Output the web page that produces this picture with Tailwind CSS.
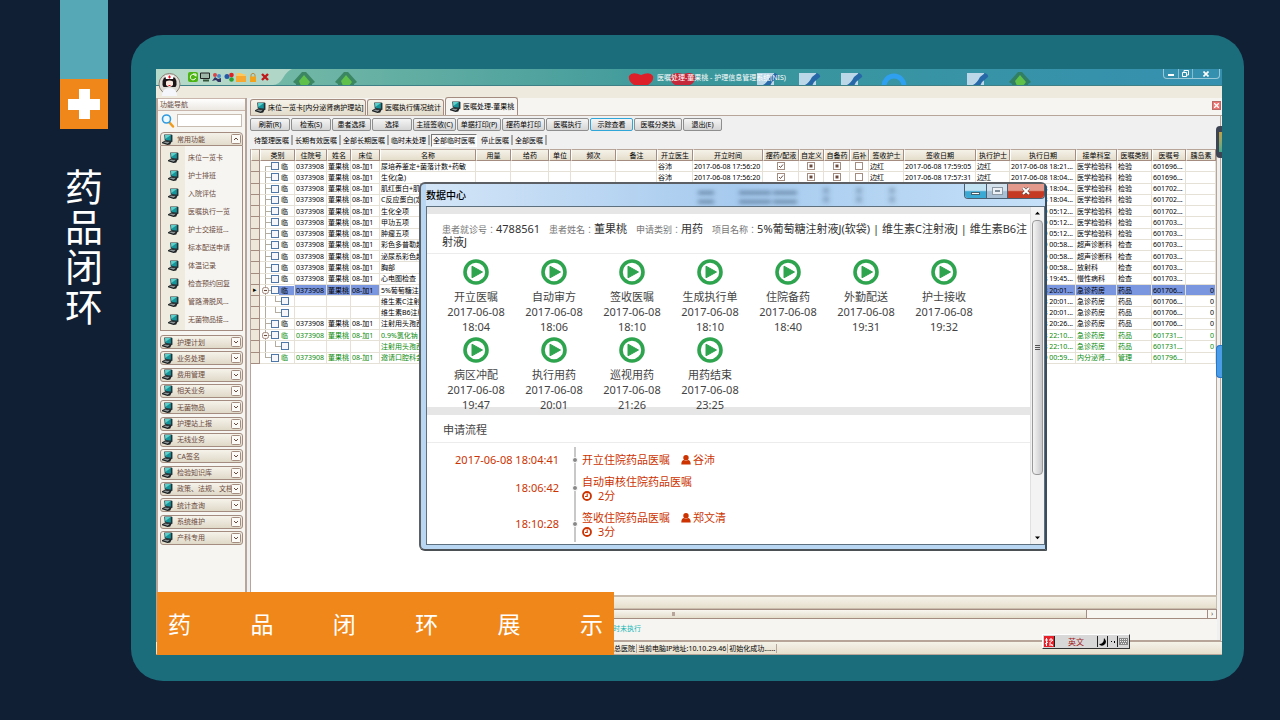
<!DOCTYPE html>
<html lang="zh-CN">
<head>
<meta charset="utf-8">
<meta name="viewport" content="width=device-width, initial-scale=1">
<title>药品闭环展示</title>
<script src="https://cdn.jsdelivr.net/npm/@tailwindcss/browser@4"></script>
</head>
<body class="flex h-screen overflow-hidden bg-[#111f35] font-['Noto_Sans','Noto_Sans_CJK_SC',sans-serif] text-[7px] leading-[9px] text-black">

<svg class="hidden" aria-hidden="true">
  <symbol id="pc" viewBox="0 0 20 20">
    <path d="M4 1h13l2 1v12l-3 1L5 12z" fill="#22343a"/><path d="M5.500 2h10.500v10L6.500 11z" fill="#159499"/><path d="M5.500 2h10.500L6 9z" fill="#5fd0cc"/>
    <path d="M0 15l6-3 11 2.500-2 4.500-5 1L0 17z" fill="#1c2022"/><path d="M2 15l4-1.500 8 1.500-4 2.500z" fill="#8d9596"/>
  </symbol>
  <symbol id="play" viewBox="0 0 26 26"><circle cx="13" cy="13" r="11" fill="none" stroke="#2ea44f" stroke-width="3.600"/><path d="M9 7.200v11.600L19.500 13z" fill="#2ea44f" stroke="#2ea44f" stroke-linejoin="round"/></symbol>
  <symbol id="user" viewBox="0 0 10 10"><circle cx="5" cy="2.800" r="2.700"/><path d="M.3 9.500c0-3 1-4.300 2.700-4.500q2 1.500 4 0c1.700.2 2.700 1.500 2.700 4.500z"/></symbol>
  <symbol id="clock" viewBox="0 0 10 10"><circle cx="5" cy="5" r="4" fill="none" stroke="currentColor" stroke-width="1.800"/><path d="M5.200 2.500V5.500H3" fill="none" stroke="currentColor" stroke-width="1.100"/></symbol>
  <symbol id="house" viewBox="0 0 24 14"><path d="M1 10L10 0h4l9 10-3 2v2H4v-2z" fill="#2f7a52" fill-opacity=".8"/><path d="M7 9l5-6 6 7-3 4H9z" fill="#5fc04a"/></symbol>
  <symbol id="doc" viewBox="0 0 24 14"><path d="M1 1h17v13H1z" fill="#bcd8e8"/><path d="M4 14q6-1 10-9l5-4q4 2 3 4l-6 5-2 4z" fill="#2768a8"/></symbol>
</svg>

<aside class="ml-[60px] flex w-12 shrink-0 flex-col items-center">
  <div class="h-[79px] w-full shrink-0 bg-[#57a8b7]"></div>
  <div class="flex h-[50px] w-full shrink-0 items-center justify-center bg-[#f0871b]">
    <svg class="size-8" viewBox="0 0 32 32"><path d="M11 1h11v10h10v11H22v9H11v-9H0V11h11z" fill="#fff"/></svg>
  </div>
  <h1 class="mt-[37px] w-[38px] text-center text-[38px] leading-[40px] font-normal break-all text-white">药品闭环</h1>
</aside>

<div class="mt-[35px] mr-9 mb-[39px] ml-[23px] flex min-w-0 flex-1 rounded-[32px] bg-[#1c6d7b] pt-[34px] pr-[22px] pb-[26px] pl-[25px]">
<main class="relative flex min-w-0 flex-1 flex-col bg-[#f0f0f0]">

  <header class="relative flex h-[17px] shrink-0 items-center overflow-hidden border-b border-[#3f7f86] bg-linear-to-r from-[#82c2aa] via-[#3a979a] to-[#3590b0] pl-8">
    <svg class="absolute top-0 left-0 h-4 w-[136px]" viewBox="0 0 136 16"><path d="M0 0h136q-5 2-9 9t-10 7H0z" fill="#d8eadd" fill-opacity=".6"/></svg>
    <svg class="absolute top-[3px] left-[136px] h-[14px] w-6"><use href="#house"/></svg>
    <svg class="absolute top-[3px] left-[178px] h-[14px] w-6"><use href="#house"/></svg>
    <svg class="absolute top-[3px] left-[472px] h-[14px] w-[72px]" viewBox="0 0 72 14"><path d="M6 13Q0 9 1 4q3-5 12-1 9-4 12 1 1 5-5 9z" fill="#dc1f28"/><path d="M47 13Q41 9 43 4q3-5 12-2 9-3 12 2 1 6-5 9z" fill="#c4283a"/></svg>
    <svg class="absolute top-[3px] left-[600px] h-[14px] w-6"><use href="#doc"/></svg>
    <svg class="absolute top-[3px] left-[642px] h-[14px] w-6"><use href="#doc"/></svg>
    <svg class="absolute top-[3px] left-[684px] h-[14px] w-6"><use href="#doc"/></svg>
    <svg class="absolute top-[3px] left-[724px] h-[14px] w-7" viewBox="0 0 28 14"><circle cx="14" cy="14" r="10" fill="none" stroke="#2fa0f0" stroke-width="5"/></svg>
    <svg class="absolute top-[3px] left-[810px] h-[14px] w-6"><use href="#doc"/></svg>
    <svg class="absolute top-[3px] left-[852px] h-[14px] w-6"><use href="#house"/></svg>
    <div class="relative flex gap-[2px]">
      <button aria-label="刷新"><svg class="size-[10px]" viewBox="0 0 10 10"><rect width="10" height="10" rx="2" fill="#4cb514"/><path d="M7.500 4A2.700 2.700 0 1 0 7.600 6M5 2h3v2.500" fill="none" stroke="#fff"/></svg></button>
      <button aria-label="电脑"><svg class="size-[10px]" viewBox="0 0 10 10"><path d="M.5 1h9v5.500h-9z" fill="#9cb6a8" stroke="#222"/><path d="M3 7.500h6v2H3z" fill="#35553a"/></svg></button>
      <button aria-label="人员"><svg class="size-[10px]" viewBox="0 0 10 10"><circle cx="3" cy="3" r="2" fill="#d44"/><circle cx="7" cy="4" r="2" fill="#48c"/><path d="M0 9l3-4 3 2 3-1v4H6L4 8z" fill="#336"/></svg></button>
      <button aria-label="分组"><svg class="size-[10px]" viewBox="0 0 10 10"><circle cx="3" cy="4.500" r="2.500" fill="#235ba8"/><circle cx="7.500" cy="3" r="2.300" fill="#e02020"/><circle cx="7.500" cy="7.500" r="2.300" fill="#29a030"/></svg></button>
      <button aria-label="文件夹"><svg class="size-[10px]" viewBox="0 0 10 10"><path d="M1 1h4l1 1h3v3H1z" fill="#ffc65a"/><path d="M0 4h10v6H0z" fill="#f7a833"/></svg></button>
      <button aria-label="锁定"><svg class="size-[10px]" viewBox="0 0 10 10"><path d="M3 5V2.500q2-2.500 4 0V5" fill="none" stroke="#b88a40"/><path d="M2 4.500h6V10H2z" fill="#f3a21c"/></svg></button>
      <button aria-label="退出"><svg class="size-[10px]" viewBox="0 0 10 10"><path d="M2 2l6 6M8 2L2 8" stroke="#c01818" stroke-width="2.400"/></svg></button>
    </div>
    <p class="absolute left-[501px] whitespace-nowrap text-white">医嘱处理-董果桃 - 护理信息管理系统(NIS)</p>
    <div class="absolute top-0 right-[2px] flex h-[10px] w-[57px] rounded-b border border-t-0 border-white/50 text-white">
      <button class="flex flex-1 items-center justify-center border-r border-white/40" aria-label="最小化"><span class="mt-[2px] h-[2px] w-[6px] bg-white"></span></button>
      <button class="flex flex-1 items-center justify-center border-r border-white/40" aria-label="还原"><svg class="size-[7px]" viewBox="0 0 7 7" fill="none" stroke="#fff"><path d="M2 2V.5h4.500V5H5M.5 2.500H4.500v4H.5z"/></svg></button>
      <button class="flex w-[26px] items-center justify-center" aria-label="关闭"><svg class="size-[6px]" viewBox="0 0 6 6"><path d="M.5.5l5 5M5.500.5l-5 5" stroke="#fff" stroke-width="1.600"/></svg></button>
    </div>
  </header>
  <div class="h-3 shrink-0 bg-[#eeeadd]"></div>
  <svg class="absolute top-1 left-[2px] size-[23px]" viewBox="0 0 23 23"><circle cx="11.500" cy="11" r="10.500" fill="#dddcd5" stroke="#8b8277"/><path d="M4.500 12q-1-9 7-9t7 9l-1 2h-12z" fill="#1d1618"/><path d="M8 8.500q3.500-2 7 0v3.500q-3.500 4-7 0z" fill="#fbe8df"/><path d="M7 2.500h9l-1 3.500H8z" fill="#fff"/><path d="M11.500 2.500v3M10 4h3M10.500 12.500h2" stroke="#e12"/><path d="M4 23q0-8 7.500-8t7.500 8z" fill="#f4f6fb"/></svg>

  <div class="flex min-h-0 flex-1">
    <nav class="flex w-[91px] shrink-0 flex-col border-x-2 border-x-[#b8a59a] bg-[#f6f5f1] text-[#6b4a3d]" aria-label="功能导航">
      <h2 class="flex h-[13px] shrink-0 items-center border-y border-[#c9b5ab] bg-linear-to-b from-white to-[#ece8e2] pl-[2px]">功能导航</h2>
      <div class="flex h-[19px] shrink-0 items-center gap-[2px] px-[3px]">
        <svg class="size-[14px] shrink-0" viewBox="0 0 14 14"><path d="M8 8l4 4.500" stroke="#ef9a1a" stroke-width="2.500" stroke-linecap="round"/><circle cx="5.500" cy="5" r="4" fill="#eef8ff" stroke="#2f9be0" stroke-width="1.600"/></svg>
        <input class="h-[13px] w-full min-w-0 border border-[#c8bcb0] bg-white" type="text" aria-label="搜索功能">
      </div>
      <section class="mx-[2px] mt-[2px] shrink-0">
        <button class="flex h-[14px] w-full items-center gap-1 rounded-t-[4px] border border-[#a48c80] bg-linear-to-b from-[#f4f1e9] to-[#e2dccb] px-[1px]" aria-expanded="true">
          <svg class="size-[11px]"><use href="#pc"/></svg>常用功能
          <svg class="ml-auto size-[10px]" viewBox="0 0 10 10"><rect x=".5" y=".5" width="9" height="9" rx="1" fill="#fbfaf6" stroke="#a48c80"/><path d="M3 6l2-2 2 2" fill="none" stroke="#6b4a3d"/></svg>
        </button>
        <ul id="menu" class="border border-t-0 border-[#a48c80] bg-linear-to-r from-[#efecdf] from-30% to-[#f6f5f1] to-30% pt-[2px] pb-[2px]"></ul>
      </section>
      <div id="groups" class="mx-[2px] mt-1 flex h-[210px] shrink-0 flex-col justify-between"></div>
    </nav>

    <section class="ml-[3px] flex min-w-0 flex-1 flex-col">
      <div class="flex h-[18px] shrink-0 items-end border-b border-[#b8a59a] bg-[#f6f5f1]" role="tablist">
        <button role="tab" class="flex h-4 w-[116px] items-center gap-[2px] rounded-t-[3px] border border-b-0 border-[#a48c80] bg-linear-to-b from-[#f6f3eb] to-[#e2dccb] pl-1 whitespace-nowrap"><svg class="size-[11px] shrink-0"><use href="#pc"/></svg>床位一览卡[内分泌肾病护理站]</button>
        <button role="tab" class="ml-[1px] flex h-4 w-[77px] items-center gap-[2px] rounded-t-[3px] border border-b-0 border-[#a48c80] bg-linear-to-b from-[#f6f3eb] to-[#e2dccb] pl-1 whitespace-nowrap"><svg class="size-[11px] shrink-0"><use href="#pc"/></svg>医嘱执行情况统计</button>
        <button role="tab" aria-selected="true" class="ml-[1px] flex h-[18px] w-[73px] items-center gap-[2px] rounded-t-[3px] border border-b-0 border-[#a48c80] bg-[#f6f5f1] pl-1 whitespace-nowrap"><svg class="size-[11px] shrink-0"><use href="#pc"/></svg>医嘱处理-董果桃</button>
        <button class="mr-[1px] mb-[5px] ml-auto flex size-[9px] items-center justify-center border border-[#b86a68] bg-[#ee7775]" aria-label="关闭标签"><svg class="size-[5px]" viewBox="0 0 5 5"><path d="M0 0l5 5M5 0L0 5" stroke="#fff" stroke-width="1.300"/></svg></button>
      </div>
      <div class="mr-[1px] flex min-h-0 flex-1 flex-col border-r border-b border-[#b8a59a] pr-[3px]">
        <div id="tools" class="mt-[2px] flex shrink-0 gap-[1px]"></div>
        <div id="filters" class="mt-[2px] flex h-[14px] shrink-0 items-center gap-[2px] pl-1 whitespace-nowrap"></div>
        <div class="mt-[2px] min-h-0 flex-1 overflow-hidden border-r border-l border-[#b8a59a] bg-white">
          <table class="h-[215px] w-full table-fixed border-separate border-spacing-0">
            <colgroup id="cols"></colgroup>
            <thead><tr id="head" class="h-3"></tr></thead>
            <tbody id="rows"></tbody>
          </table>
        </div>
        <div class="h-[14px] shrink-0 border border-t-2 border-[#c9bdb0] bg-linear-to-b from-[#f5f2e9] to-[#e6dfcd]"></div>
        <div class="flex h-[10px] shrink-0 border border-[#a48c80] bg-[#f8f6f0] pl-[9px]">
          <div class="flex w-[827px] items-center justify-center border-r border-[#a48c80] bg-linear-to-b from-[#f8f6f0] to-[#e4ddcb]"><span class="h-1 w-[3px] bg-[#b8a59a]"></span></div>
          <button class="ml-auto w-[9px] border-l border-[#a48c80] leading-[8px] text-[#6b4a3d]" aria-label="向右滚动">›</button>
        </div>
        <p class="h-[21px] shrink-0 bg-[#f6f5f1] pt-[5px] pl-[363px] text-[#12b5b5]">时未执行</p>
      </div>
    </section>
  </div>

  <footer class="flex h-[14px] shrink-0 items-center border-y border-[#b8a59a] bg-linear-to-b from-[#f5f2e9] to-[#e6dfcd] pl-[458px] whitespace-nowrap">
    <span class="border-r border-[#b8a59a] pr-[1px]">总医院</span>
    <span class="border-r border-[#b8a59a] px-[1px]">当前电脑IP地址:10.10.29.46</span>
    <span class="border-r border-[#b8a59a] px-[1px]">初始化成功......</span>
  </footer>

  <div class="absolute top-[57px] right-0 flex h-8 w-[6px] flex-col justify-center rounded-l bg-[#3d4554] pl-[3px]"><span class="h-5 bg-linear-to-b from-[#c0a040] to-[#3fa88c]"></span></div>
  <div class="absolute top-[276px] right-0 h-[33px] w-[6px] rounded-l border border-r-0 border-[#2677c8] bg-[#4a9be8]"></div>

  <div class="absolute bottom-0 left-[1px] flex h-[63px] w-[457px] items-center justify-between bg-[#f0871b] px-[11px] pt-[2px] text-[23px] font-normal text-white">
    <span>药</span><span>品</span><span>闭</span><span>环</span><span>展</span><span>示</span>
  </div>

  <div class="absolute right-[92px] bottom-[6px] flex h-[15px] w-[88px] border border-t-white border-r-[#333] border-b-[#333] border-l-white bg-[#d8d8d8] p-[1px]">
    <span class="flex w-[11px] items-center justify-center border-r border-[#222] bg-[#e8202a]"><svg class="size-[10px]" viewBox="0 0 10 10" fill="none" stroke="#fff"><path d="M1 3h3M2.500 1v8M1 7l3-2M5 3h4L5.500 6 9 9M5 8h4M7 1v2"/></svg></span>
    <button class="flex-1 border-r border-[#222] text-[8px] text-[#a01818]">英文</button>
    <span class="flex w-[10px] items-center justify-center border-r border-[#222]"><svg class="size-2" viewBox="0 0 8 8"><path d="M5 0q4 4 0 7-3 2-5-1 5 0 5-6z"/></svg></span>
    <span class="flex w-[10px] items-center justify-center gap-[2px] border-r border-[#222]"><i class="size-[1px] bg-black"></i><i class="h-[2px] w-[1px] bg-black"></i></span>
    <span class="flex w-[10px] items-center justify-center"><svg class="h-[7px] w-[9px]" viewBox="0 0 9 7"><path d="M0 0h9v7H0z" fill="#888"/><path d="M1 1.500h7M1 3.500h7M2 5.500h5" stroke="#eee" stroke-dasharray="1 1"/></svg></span>
  </div>

  <div role="dialog" aria-label="数据中心" class="absolute top-[113px] right-[175px] left-[263px] flex h-[369px] flex-col rounded-t-md rounded-bl-md border-2 border-t-[#5c6065] border-r-[#3a4d5c] border-b-[#4b5054] border-l-[#5c6065] bg-[#b9d7f3] pr-0 pb-1 pl-[5px]">
    <header class="relative flex h-[22px] shrink-0 items-center overflow-hidden bg-linear-to-r from-[#d3e5f7] via-[#a6caee] to-[#c5e0f8] text-[10px] font-medium">
      <div class="absolute top-[2px] left-[272px] flex gap-[25px] text-[8px] whitespace-nowrap text-[#24405c]/70 blur-[2px]" aria-hidden="true"><span>▬▬<br>▬▬</span><span>▬▬▬▬ ▬▬▬<br>▬▬▬▬ ▬▬▬</span><span>▣<br>▣</span><span>▣<br>▣</span><span>▣<br>▣</span></div>
      <h2 class="relative">数据中心</h2>
      <div class="absolute top-0 right-0 flex h-[15px] w-[81px] overflow-hidden rounded-b border border-t-0 border-[#4b5f72]">
        <button class="flex w-[22px] items-center justify-center border-r border-[#4b5f72] bg-linear-to-b from-[#c3e3f2] from-45% to-[#3aa9d4] to-55%" aria-label="最小化"><span class="mt-1 h-[3px] w-[9px] border border-[#46606e] bg-white"></span></button>
        <button class="flex w-[21px] items-center justify-center border-r border-[#4b5f72] bg-linear-to-b from-[#d4e2ee] from-45% to-[#a9bfd3] to-55%" aria-label="最大化"><span class="h-[6px] w-[9px] border-2 border-[#eef2f6] bg-[#7e8c99] outline outline-[#8d9aa6]"></span></button>
        <button class="flex flex-1 items-center justify-center bg-linear-to-b from-[#e39a8c] from-45% to-[#c43a22] to-55%" aria-label="关闭窗口"><svg class="size-2" viewBox="0 0 8 8"><path d="M1 1l6 6M7 1L1 7" stroke="#444" stroke-width="3"/><path d="M1 1l6 6M7 1L1 7" stroke="#fff" stroke-width="2"/></svg></button>
      </div>
    </header>
    <div class="flex min-h-0 flex-1 border border-[#5d7080] bg-white text-[11px] leading-[15px] text-[#444]">
      <div class="flex min-w-0 flex-1 flex-col overflow-hidden">
        <div class="h-[7px] shrink-0 bg-[#e6e6e6]"></div>
        <div class="h-10 shrink-0 border-b border-[#ececec] pt-[9px] pl-[15px] leading-[12px] text-[#333]">
          <p class="whitespace-nowrap"><span lang="zh-TW" class="font-['Noto_Sans_CJK_TC',sans-serif] text-[9px] text-[#777]">患者就诊号：</span>4788561<span lang="zh-TW" class="ml-[9px] font-['Noto_Sans_CJK_TC',sans-serif] text-[9px] text-[#777]">患者姓名：</span>董果桃<span lang="zh-TW" class="ml-[9px] font-['Noto_Sans_CJK_TC',sans-serif] text-[9px] text-[#777]">申请类别：</span>用药<span lang="zh-TW" class="ml-[9px] font-['Noto_Sans_CJK_TC',sans-serif] text-[9px] text-[#777]">项目名称：</span>5%葡萄糖注射液J(软袋) | 维生素C注射液J | 维生素B6注<br>射液J</p>
        </div>
        <ol id="steps" class="relative z-10 grid h-[153px] shrink-0 grid-cols-[repeat(7,78px)] content-start pt-1 pl-[10px] text-center"></ol>
        <div class="h-2 shrink-0 bg-[#e6e6e6]"></div>
        <h3 class="h-7 shrink-0 border-b border-[#ececec] pt-[7px] pl-4">申请流程</h3>
        <ol class="ml-[26px] flex shrink-0 flex-col pt-[4px] leading-[14px] text-[#cc3300]">
          <li class="flex h-[25px]"><time class="w-[106px] pt-[6px] text-right">2017-06-08 18:04:41</time><span class="relative ml-[15px] w-[2px] bg-[#c8c8c8]"><i class="absolute top-[10px] -left-[2px] size-[6px] rounded-full border border-white bg-[#888]"></i></span><p class="flex items-start pt-[6px] pl-[6px] whitespace-nowrap">开立住院药品医嘱<svg class="mt-[2px] mr-[2px] ml-[11px] size-[10px] fill-current"><use href="#user"/></svg>谷沛</p></li>
          <li class="flex h-[36px]"><time class="w-[106px] pt-[9px] text-right">18:06:42</time><span class="relative ml-[15px] w-[2px] bg-[#c8c8c8]"><i class="absolute top-[13px] -left-[2px] size-[6px] rounded-full border border-white bg-[#888]"></i></span><p class="pt-[3px] pl-[6px] whitespace-nowrap">自动审核住院药品医嘱<span class="flex items-center gap-[6px]"><svg class="size-[10px]"><use href="#clock"/></svg>2分</span></p></li>
          <li class="flex h-[34px]"><time class="w-[106px] pt-[9px] text-right">18:10:28</time><span class="relative ml-[15px] w-[2px] bg-[#c8c8c8]"><i class="absolute top-[13px] -left-[2px] size-[6px] rounded-full border border-white bg-[#888]"></i></span><div class="pt-[3px] pl-[6px] whitespace-nowrap"><p class="flex">签收住院药品医嘱<svg class="mt-[2px] mr-[2px] ml-[11px] size-[10px] fill-current"><use href="#user"/></svg>郑文清</p><p class="flex items-center gap-[6px]"><svg class="size-[10px]"><use href="#clock"/></svg>3分</p></div></li>
        </ol>
      </div>
      <div class="flex w-[14px] shrink-0 flex-col items-center border-l border-[#e0e0e0] bg-[#f3f3f3]">
        <svg class="h-[13px] w-[5px] shrink-0" viewBox="0 0 7 13"><path d="M0 8l3.500-4L7 8z"/></svg>
        <div class="flex h-[255px] w-[11px] flex-col items-center justify-center gap-[1px] rounded-sm border border-[#999] bg-linear-to-r from-[#f5f5f5] to-[#c9c9cc]"><i class="h-[1px] w-[5px] bg-[#555]"></i><i class="h-[1px] w-[5px] bg-[#555]"></i><i class="h-[1px] w-[5px] bg-[#555]"></i></div>
        <svg class="mt-auto h-[13px] w-[5px] shrink-0" viewBox="0 0 7 13"><path d="M0 5l3.500 4L7 5z"/></svg>
      </div>
    </div>
  </div>
</main>
</div>

<script>
const put = (id, html) => { document.getElementById(id).innerHTML = html; };

put('menu', ['床位一览卡','护士排班','入院评估','医嘱执行一览','护士交接班...','标本配送申请','体温记录','检查预约回复','管路滑脱风...','无菌物品接...'].map(t =>
  `<li><a href="#" class="flex h-[18px] items-center gap-[9px] pl-[7px] whitespace-nowrap"><svg class="size-[11px] shrink-0"><use href="#pc"/></svg>${t}</a></li>`).join(''));

put('groups', ['护理计划','业务处理','费用管理','相关业务','无菌物品','护理站上报','无线业务','CA签名','检验知识库','政策、法规、文档','统计查询','系统维护','产科专用'].map(t =>
  `<button class="flex h-[14px] w-full items-center gap-1 rounded-[3px] border border-[#a48c80] bg-linear-to-b from-[#f6f3eb] to-[#dfd9c8] px-[1px]"><svg class="size-[11px] shrink-0"><use href="#pc"/></svg><span class="min-w-0 flex-1 overflow-hidden text-left whitespace-nowrap">${t}</span><svg class="-ml-1 size-[10px] shrink-0" viewBox="0 0 10 10"><rect x=".5" y=".5" width="9" height="9" rx="1" fill="#fbfaf6" stroke="#a48c80"/><path d="M3 4l2 2 2-2" fill="none" stroke="#6b4a3d"/></svg></button>`).join(''));

put('tools', [['刷新(R)',40],['检索(S)',40],['患者选择',39],['选择',40],['主班签收(C)',43],['单据打印(P)',44],['摆药单打印',43],['医嘱执行',43],['示踪查看',43],['医嘱分类执',48],['退出(E)',39]].map(([t, w]) =>
  `<button style="width:${w}px" class="h-[13px] rounded-[2px] border bg-linear-to-b from-[#f5f5f5] to-[#d5d5d5] leading-[10px] whitespace-nowrap ${t === '示踪查看' ? 'border-[#2fa5d8]' : 'border-[#8e8e8e]'}">${t}</button>`).join(''));

put('filters', ['待整理医嘱','长期有效医嘱','全部长期医嘱','临时未处理','全部临时医嘱','停止医嘱','全部医嘱'].map(t =>
  t === '全部临时医嘱'
    ? `<button class="mr-[2px] -ml-[1px] h-[13px] border border-t-[#777] border-r-white border-b-white border-l-[#777] bg-[#f8f8f8] px-[1px]">${t}</button>`
    : `<button>${t}</button><i class="h-[10px] w-[2px] bg-[#a8a8a8]"></i>`).join(''));

const cols = [['',9],['类别',35],['住院号',32],['姓名',24],['床位',29],['名称',96],['用量',35],['给药',38],['单位',22],['频次',45],['备注',41],['开立医生',36],['开立时间',70],['摆药/配液',36],['自定义',25],['自备药',26],['后补',19],['签收护士',35],['签收日期',72],['执行护士',34],['执行日期',66],['接单科室',41],['医嘱类别',35],['医嘱号',34],['胰岛素',30]];
put('cols', cols.map(c => `<col style="width:${c[1]}px">`).join(''));
put('head', cols.map(c => `<th class="overflow-hidden border border-t-[#b8a59a] border-r-[#a48c80] border-b-[#a48c80] border-l-white bg-linear-to-b from-[#f5f2e9] to-[#e4ddcb] p-0 font-normal whitespace-nowrap">${c[0]}</th>`).join(''));

// name, execution time, department, category, order number, tree kind
const data = [
 ['尿培养鉴定+菌落计数+药敏','08 18:21','医学检验科','检验','601696','first'],
 ['生化(急)','08 18:04','医学检验科','检验','601696',''],
 ['肌红蛋白+肌','08 18:04','医学检验科','检验','601702',''],
 ['C反应蛋白(定','08 18:04','医学检验科','检验','601702',''],
 ['生化全项','09 05:12','医学检验科','检验','601702',''],
 ['甲功五项','09 05:12','医学检验科','检验','601703',''],
 ['肿瘤五项','09 05:12','医学检验科','检验','601703',''],
 ['彩色多普勒超','09 00:58','超声诊断科','检查','601703',''],
 ['泌尿系彩色超','09 00:58','超声诊断科','检查','601703',''],
 ['胸部','09 00:58','放射科','检查','601703',''],
 ['心电图检查','08 19:45','慢性病科','检查','601703',''],
 ['5%葡萄糖注','08 20:01','急诊药房','药品','601706','open'],
 ['维生素C注射','08 20:01','急诊药房','药品','601706','child'],
 ['维生素B6注射','08 20:01','急诊药房','药品','601706','child'],
 ['注射用头孢西','08 20:26','急诊药房','药品','601706',''],
 ['0.9%氯化钠','08 22:10','急诊药房','药品','601731','open'],
 ['注射用头孢西','08 22:10','急诊药房','药品','601731','child'],
 ['邀请口腔科会','09 00:59','内分泌肾...','管理','601796','last']
];
const lines = {
  first: 'M5.500 5v7M5 5.500h6', '': 'M5.500 0v12M5 5.500h6', last: 'M5.500 0v6M5 5.500h6',
  open: 'M5.500 0v12M5 5.500h6', child: 'M5.500 0v12M15.500 0v6M15 5.500h6'
};
const tick = (mark, label) => `<span class="flex justify-center"><svg role="img" aria-label="${label}" class="size-2" viewBox="0 0 8 8"><rect x=".5" y=".5" width="7" height="7" fill="#fff" stroke="#a48c80"/>${mark}</svg></span>`;
const check = tick('<path d="M2 4l1.500 1.500L6 2.500" fill="none" stroke="#6b4a3d"/>', '已选');
const mixed = tick('<path d="M2.500 2.500h3v3h-3z" fill="#6b4a3d"/>', '部分');
const empty = tick('', '未选');
put('rows', data.map((d, i) => {
  const [name, time, dept, kind, no, tree] = d, child = tree === 'child', sel = i === 11, green = i > 14;
  const glyph = `<span class="flex h-[10px] items-center"><svg class="h-[11px] shrink-0 ${child ? 'w-[21px]' : 'w-[11px]'}" viewBox="0 0 ${child ? 21 : 11} 11"><path d="${lines[tree]}" fill="none" stroke="#b5aca0"/>${tree === 'open' ? '<rect x="2.500" y="2.500" width="6" height="6" rx="2" fill="#f6f5f1" stroke="#a48c80"/><path d="M4 5.500h3" stroke="#6b4a3d"/>' : ''}</svg><input type="checkbox" aria-label="选择 ${name}" class="size-2 shrink-0 appearance-none border border-[#4d78a8] bg-[#f4f6fa]"><span class="${sel ? 'bg-[#7a96df]' : ''} flex-1 pl-[2px]">${child ? '' : '临'}</span></span>`;
  const middle = i < 2
    ? ['谷沛', '2017-06-08 17:56:20', check, mixed, mixed, empty, '边红', i ? '2017-06-08 17:57:31' : '2017-06-08 17:59:05', '边红']
    : ['', '', '', '', '', '', '', '', ''];
  const cells = ['', glyph, child ? '' : '0373908', child ? '' : '董果桃', child ? '' : '08-加1', name, '', '', '', '', '',
    ...middle, `2017-06-${time}...`, dept, kind, no + '...', i > 10 && i < 17 ? '0' : ''];
  return `<tr class="${green ? 'text-[#0a8a0a]' : ''}">` + cells.map((c, k) => k === 0
    ? `<td class="overflow-hidden border-r border-b border-[#a48c80] bg-[#ece7d9] p-0 text-center leading-[8px]">${sel ? '▸' : ''}</td>`
    : `<td class="overflow-hidden border-r border-b border-[#e6e1d6] py-0 whitespace-nowrap ${k === 1 ? 'px-0' : k === 24 ? 'px-[1px] text-right' : 'px-[1px]'} ${sel && k > 1 && k !== 5 ? 'bg-[#7a96df]' : ''}">${c}</td>`).join('') + '</tr>';
}).join(''));

const step = (t, h) => `<li class="flex h-[78px] flex-col items-center"><svg class="mt-[1px] mb-1 size-[26px] shrink-0"><use href="#play"/></svg><span>${t}</span><time>2017-06-08</time><time>${h}</time></li>`;
put('steps', [['开立医嘱','18:04'],['自动审方','18:06'],['签收医嘱','18:10'],['生成执行单','18:10'],['住院备药','18:40'],['外勤配送','19:31'],['护士接收','19:32'],['病区冲配','19:47'],['执行用药','20:01'],['巡视用药','21:26'],['用药结束','23:25']].map(s => step(...s)).join(''));
</script>
</body>
</html>
